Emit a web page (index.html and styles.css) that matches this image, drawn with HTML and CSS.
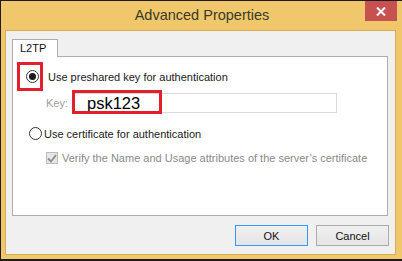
FILE: index.html
```html
<!DOCTYPE html>
<html lang="en">
<head>
    <meta charset="UTF-8">
    <title>Advanced Properties</title>
    <link rel="stylesheet" href="styles.css">
</head>
<body>
    <div class="window">
        <div class="titlebar">
            <span></span>
            <span class="title">Advanced Properties</span>
            <button class="close-button" aria-label="Close">
                <svg width="10" height="9" viewBox="0 0 10 9">
                    <path d="M1 0.5 L9 8.5 M9 0.5 L1 8.5" stroke="#fff" stroke-width="2" fill="none"/>
                </svg>
            </button>
        </div>

        <div class="client">
            <div class="tabs">
                <div class="tab active">L2TP</div>
            </div>
            <div class="panel">
                <div class="row row-psk">
                    <span class="highlight">
                        <span class="radio checked"></span>
                    </span>
                    <span class="label">Use preshared key for authentication</span>
                </div>
                <div class="row row-key">
                    <span class="key-label">Key:</span>
                    <div class="key-input">
                        <span class="key-value">psk123</span>
                        <span class="key-highlight"></span>
                    </div>
                </div>
                <div class="row row-cert">
                    <span class="radio"></span>
                    <span class="label">Use certificate for authentication</span>
                </div>
                <div class="row row-verify">
                    <span class="checkbox">
                        <svg width="10" height="9" viewBox="0 0 10 9">
                            <path d="M1 4.5 L4 7.5 L9 1" stroke="#8c8c8c" stroke-width="1.8" fill="none"/>
                        </svg>
                    </span>
                    <span class="label disabled">Verify the Name and Usage attributes of the server’s certificate</span>
                </div>
            </div>
            <div class="buttons">
                <button class="btn default">OK</button>
                <button class="btn">Cancel</button>
            </div>
        </div>
    </div>
</body>
</html>
```

FILE: styles.css
```css
body {
    margin: 0;
    background: #1c1c1c;
    font-family: "Liberation Sans", Arial, sans-serif;
    font-size: 11px;
    color: #1a1a1a;
}

.window {
    width: 402px;
    height: 261px;
    box-sizing: border-box;
    border-top: 1px solid #1c1c1c;
    border-left: 1px solid #1c1c1c;
    border-bottom: 2px solid #1c1c1c;
    background: #f0c86b; /* win8 frame colour */
    display: flex;
    flex-direction: column;
}

.titlebar {
    height: 29px;
    display: grid;
    grid-template-columns: 1fr auto 1fr;
    align-items: start;
}

.title {
    font-size: 14.5px;
    color: #3a3a2a;
    line-height: 29px;
    padding-left: 1px;
}

.close-button {
    justify-self: end;
    margin-right: 5px;
    width: 32px;
    height: 20px;
    padding: 0;
    border: none;
    background: #c75050;
    display: flex;
    align-items: center;
    justify-content: center;
}

.client {
    flex: 1;
    margin: 0 6px 4px 4px;
    border: 1px solid #d6ac55;
    background: #f0f0f0;
    padding: 8px 6px 0 6px;
    display: flex;
    flex-direction: column;
}

.tabs {
    display: flex;
    height: 17px;
    position: relative;
    z-index: 1;
}

.tab {
    width: 46px;
    height: 18px;
    box-sizing: border-box;
    border: 1px solid #adadad;
    border-bottom: none;
    background: #fff;
    padding-left: 7px;
    line-height: 17px;
    color: #111;
}

.panel {
    height: 160px;
    box-sizing: border-box;
    margin-right: 1px;
    border: 1px solid #adadad;
    background: #fff;
    padding: 5px 0 0 4px;
}

.row {
    display: flex;
    align-items: center;
}

.radio {
    width: 13px;
    height: 13px;
    box-sizing: border-box;
    border: 1px solid #333;
    border-radius: 50%;
    background: #fff;
    display: flex;
    align-items: center;
    justify-content: center;
}

.radio.checked::after {
    content: "";
    width: 7px;
    height: 7px;
    border-radius: 50%;
    background: #1a1a1a;
}

.highlight {
    width: 26px;
    height: 29px;
    box-sizing: border-box;
    border: 3px solid #e0202a;
    display: flex;
    align-items: center;
    justify-content: flex-end;
    padding-right: 1px;
}

.row-psk .label {
    margin-left: 5px;
}

.row-key {
    height: 22px;
    align-items: flex-end;
    margin-left: 29px;
}

.key-label {
    color: #a0a0a0;
    width: 28px;
    line-height: 20px;
}

.key-input {
    position: relative;
    width: 263px;
    height: 20px;
    box-sizing: border-box;
    border: 1px solid #d9d9d9;
    background: #fff;
}

.key-value {
    font-size: 16.5px;
    color: #000;
    position: absolute;
    left: 12px;
    top: -1px;
    line-height: 20px;
}

.key-highlight {
    position: absolute;
    left: -3px;
    top: -4px;
    width: 90px;
    height: 24px;
    box-sizing: border-box;
    border: 3px solid #e0202a;
}

.row-cert {
    height: 19px;
    margin: 11px 0 0 12px;
}

.row-cert .label {
    margin-left: 2px;
}

.row-verify {
    height: 18px;
    margin: 6px 0 0 29px;
}

.checkbox {
    width: 12px;
    height: 12px;
    box-sizing: border-box;
    border: 1px solid #bcbcbc;
    background: #e6e6e6;
    display: flex;
    align-items: center;
    justify-content: center;
}

.label.disabled {
    color: #8a8a8a;
    margin-left: 4px;
}

.buttons {
    display: flex;
    justify-content: flex-end;
    gap: 8px;
    margin-top: 9px;
}

.btn {
    width: 73px;
    height: 21px;
    box-sizing: border-box;
    border: 1px solid #acacac;
    background: linear-gradient(#f0f0f0, #e5e5e5);
    font-family: "Liberation Sans", Arial, sans-serif;
    font-size: 11px;
    color: #111;
    padding: 0;
}

.btn.default {
    border-color: #3399ff;
}
```
